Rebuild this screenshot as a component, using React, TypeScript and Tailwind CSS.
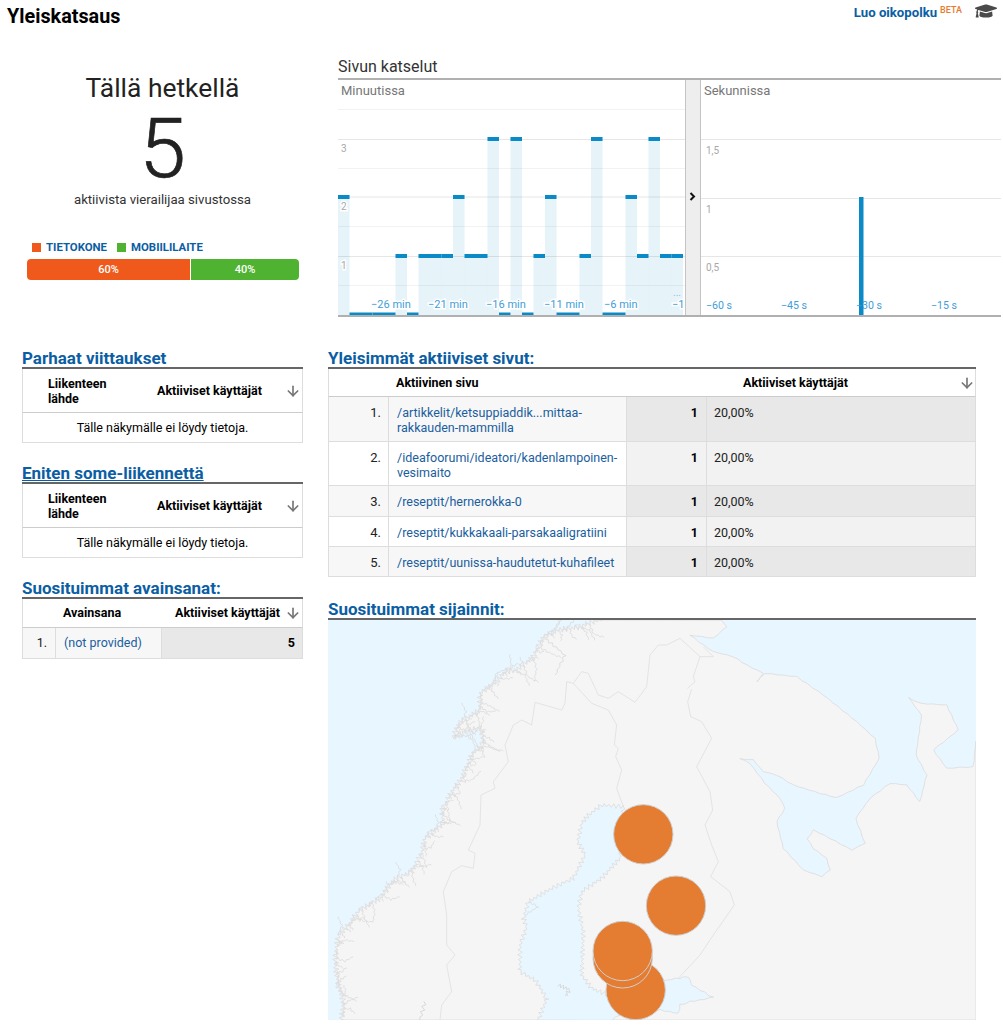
import { ArrowDown } from "lucide-react";
import { FaGraduationCap } from "react-icons/fa";

type P = [number, number];
const z7 = (a: P[]): P[] => a.map(([x, y]) => [x + 975, y] as P);

const jag = (pts: P[], amp: number, step = 9): P[] => {
  const out: P[] = [];
  let n = 0;
  for (let i = 0; i < pts.length - 1; i++) {
    const [x1, y1] = pts[i];
    const [x2, y2] = pts[i + 1];
    const len = Math.hypot(x2 - x1, y2 - y1);
    const c = Math.max(1, Math.round(len / step));
    for (let k = 0; k < c; k++) {
      const t = k / c;
      const nx = -(y2 - y1) / len;
      const ny = (x2 - x1) / len;
      n++;
      const o = (n % 2 ? 1 : -1) * amp * (0.35 + 0.65 * Math.abs(Math.sin(n * 12.9898)));
      out.push([x1 + (x2 - x1) * t + nx * o, y1 + (y2 - y1) * t + ny * o]);
    }
  }
  out.push(pts[pts.length - 1]);
  return out;
};

const d = (pts: P[], close = false) =>
  "M" + pts.map(([x, y]) => `${x.toFixed(1)} ${y.toFixed(1)}`).join("L") + (close ? "Z" : "");

const westCoast: P[] = [
  [50, 1215], [55, 1160], [40, 1110], [30, 1040], [40, 960], [75, 925], [100, 890], [130, 870], [165, 850],
  [205, 795], [260, 770], [290, 715], [300, 670], [355, 625], [350, 590], [375, 540], [410, 490], [440, 420],
  [475, 385], [470, 340], [430, 345], [385, 370], [400, 325], [465, 285], [465, 235], [515, 200], [540, 170],
  [575, 165], [625, 125], [655, 65], [700, 45], [770, 35], [815, 15],
];
const arcticCoast: P[] = z7([
  [215, 15], [230, 35], [190, 70], [120, 60], [160, 90], [190, 110], [250, 125], [290, 150], [340, 175], [320, 200],
  [345, 175], [440, 185], [520, 240], [620, 320], [675, 370], [688, 430], [640, 510], [560, 548], [510, 535],
  [430, 510], [380, 480], [340, 470], [310, 435], [270, 430], [300, 445], [345, 505], [390, 550], [405, 580],
  [380, 620], [400, 700], [460, 765], [515, 785], [540, 765], [530, 730], [490, 700], [472, 672], [490, 645],
  [540, 670], [605, 705], [645, 685], [617, 610], [660, 550], [720, 505], [770, 510], [810, 560], [830, 480],
  [798, 420], [815, 300], [775, 248], [810, 265], [890, 270], [925, 345], [850, 405], [890, 460], [970, 455], [978, 378],
]);
const land = d([...jag(westCoast, 9, 6), ...jag(arcticCoast, 1.2, 18), [1953, 1215], [50, 1215]], true);

const fjordPath = (() => {
  let out = "";
  let n = 0;
  for (let i = 0; i < westCoast.length - 1; i++) {
    const [x1, y1] = westCoast[i];
    const [x2, y2] = westCoast[i + 1];
    const len = Math.hypot(x2 - x1, y2 - y1);
    const c = Math.max(1, Math.round(len / 12));
    for (let k = 0; k < c; k++) {
      n++;
      const t = k / c;
      const x = x1 + (x2 - x1) * t;
      const y = y1 + (y2 - y1) * t;
      const r = Math.abs(Math.sin(n * 7.31));
      const l = 10 + (y < 520 ? 66 : 50) * r * r;
      const a = 0.1 + 1.3 * Math.sin(n * 2.39);
      const mx = x + (l / 2) * Math.cos(a);
      const my = y + (l / 2) * Math.sin(a);
      const a2 = a + 0.9 * Math.sin(n * 5.1);
      out += d(jag([[x, y], [mx, my], [mx + (l / 2) * Math.cos(a2), my + (l / 2) * Math.sin(a2)]], 3, 7));
    }
  }
  return out;
})();

const swedenCoast: P[] = [
  [895, 575], [830, 570], [790, 600], [770, 625], [758, 680], [780, 720], [745, 790], [680, 820], [610, 860],
  [595, 910], [605, 935], [585, 990], [585, 1070], [630, 1095], [665, 1150], [640, 1215],
];
const gulf: P[] = [
  [860, 1215], [900, 1190], ...z7([[30, 1185], [85, 1195], [90, 1170], [120, 1160], [190, 1148], [125, 1110], [115, 1085], [50, 1095]]),
];
const finlandCoast: P[] = [
  [850, 1140], [800, 1120], [770, 1080], [775, 950], [760, 880], [770, 830], [830, 790], [885, 730], [895, 575],
];
const baltic = d([...jag(swedenCoast, 7, 7), ...jag(gulf, 2, 14), ...jag(finlandCoast, 7, 7)], true);

const borders: P[][] = [
  [[345, 1215], [350, 1170], [380, 1130], [365, 1050], [390, 1020], [365, 990], [365, 900], [355, 830], [380, 770], [410, 752], [445, 760], [450, 715], [430, 705], [465, 630], [468, 540], [510, 520], [505, 500], [550, 440], [540, 390], [565, 330], [590, 315], [620, 330], [630, 262], [710, 285], [720, 265], [725, 200], [745, 205]],
  [[745, 205], [770, 170], [790, 175], [820, 240], [850, 250], [880, 230], [930, 262], [965, 215], [975, 120], [1000, 90], ...z7([[50, 90], [90, 70], [150, 125], [130, 185], [135, 200], [112, 220]])],
  [[745, 205], [800, 265], [850, 285], [875, 330], [868, 390], [880, 400], [872, 425], [890, 465], [875, 520], [895, 575]],
  z7([[125, 222], [113, 260], [122, 305], [155, 320], [185, 370], [140, 455], [180, 530], [188, 585], [165, 630], [185, 690], [205, 740], [182, 785], [240, 830], [253, 870], [190, 960], [150, 1020], [85, 1090]]),
  z7([[150, 125], [190, 125], [160, 95]]),
];

const MapArt = () => (
  <svg viewBox="9 15 1944 1200" className="block w-[648px] h-[400px]">
    <rect x="9" y="15" width="1944" height="1200" fill="#e8f6ff" />
    <path d={land} fill="#f5f5f5" stroke="#dcdcdc" strokeWidth="2.5" strokeLinejoin="round" />
    <path d={fjordPath} fill="none" stroke="#dcdcdc" strokeWidth="2.5" />
    <path d={baltic} fill="#e8f6ff" stroke="#dcdcdc" strokeWidth="2.5" strokeLinejoin="round" />
    <path d={d(jag([[700, 1110], [735, 1125], [720, 1140]], 6, 5))} fill="none" stroke="#d9d9d9" strokeWidth="3" />
    <path d={d(jag([[610, 860], [640, 875], [600, 900]], 3, 7))} fill="none" stroke="#d9d9d9" strokeWidth="2" />
    <path d={d(jag([[300, 1160], [285, 1215]], 6, 8))} fill="none" stroke="#d9d9d9" strokeWidth="3" />
    <path d={d(jag([[660, 70], [720, 120], [690, 180]], 4, 9))} fill="none" stroke="#d9d9d9" strokeWidth="2.5" />
    {borders.map((b, i) => (
      <path key={i} d={d(b)} fill="none" stroke="#e0e0e0" strokeWidth="2.5" strokeLinejoin="round" />
    ))}
    <g fill="#e47c31" stroke="#cfcfcf" strokeWidth="3">
      <circle cx="955" cy="658" r="89" />
      <circle cx="1053" cy="872" r="89" />
      <circle cx="932" cy="1125" r="89" />
      <circle cx="893" cy="1030" r="89" />
      <circle cx="893" cy="1008" r="89" />
    </g>
  </svg>
);

const values = [2, 0, 0, 0, 0, 1, 0, 1, 1, 1, 2, 1, 1, 3, 0, 3, 0, 1, 2, 0, 0, 1, 3, 0, 0, 2, 1, 3, 1, 1];
const tops = [232.5, 174, 115, 57];
const gridL = [29.5, 59.5, 88.5, 117, 146.5, 176.5, 205.5];
const halo = { paintOrder: "stroke", stroke: "#fff", strokeWidth: 3 } as const;

const MinuteChart = () => (
  <svg width="347" height="235" className="block" fontFamily="Roboto, sans-serif">
    {gridL.map((y, i) => (
      <line key={y} x1="0" x2="347" y1={y} y2={y} stroke={i % 2 ? "#e6e6e6" : "#f2f2f2"} />
    ))}
    {values.map((v, i) => (
      <g key={i}>
        <rect x={i * 11.5} y={tops[v]} width="11.5" height={235 - tops[v]} fill="#0a8ac6" fillOpacity={v ? 0.1 : 0} />
        <rect x={i * 11.5} y={tops[v]} width="11.5" height={v ? 4 : 3} fill="#0a8ac6" />
      </g>
    ))}
    {[["3", 68], ["2", 126], ["1", 185]].map(([t, y]) => (
      <text key={t} x="3" y={y as number + 4} fontSize="10" fill="#a8a8a8" style={halo}>{t}</text>
    ))}
    {[["−26 min", 33], ["−21 min", 90], ["−16 min", 148], ["−11 min", 206], ["−6 min", 266], ["−1", 334]].map(([t, x]) => (
      <text key={t} x={x as number} y="228" fontSize="11" fill="#3f9ed8" style={halo}>{t}</text>
    ))}
    <text x="335" y="216" fontSize="10" fill="#8dbfe0">...</text>
  </svg>
);

const SecondChart = () => (
  <svg width="300" height="235" className="block" fontFamily="Roboto, sans-serif">
    {[59.5, 118.5, 176.5].map((y) => (
      <line key={y} x1="0" x2="300" y1={y} y2={y} stroke="#e6e6e6" />
    ))}
    {[["1,5", 74], ["1", 133], ["0,5", 191]].map(([t, y]) => (
      <text key={t} x="5" y={y as number} fontSize="10" fill="#a8a8a8">{t}</text>
    ))}
    <rect x="158" y="117" width="4.5" height="118" fill="#0a8ac6" />
    {[["−60 s", 5], ["−45 s", 80], ["−30 s", 155], ["−15 s", 230]].map(([t, x]) => (
      <text key={t} x={x as number} y="229" fontSize="10.6" fill="#3f9ed8">{t}</text>
    ))}
  </svg>
);

const Heading = ({ children, underline }: { children: string; underline?: boolean }) => (
  <h2 className={`h-[18px] text-[17px] leading-[18px] font-bold text-[#0b5ea3] ${underline ? "underline" : ""}`}>{children}</h2>
);

const Sort = () => <ArrowDown size={16} strokeWidth={2.5} className="text-[#777]" />;

const EmptyTable = () => (
  <div className="border-t-2 border-[#666] text-[12.5px]">
    <div className="flex h-[44px] items-center border-x border-b border-[#ddd] border-b-[#ccc] font-bold text-black leading-[15px]">
      <div className="w-[134px] pl-[25px] pr-[50px]">Liikenteen lähde</div>
      <div className="flex-1 whitespace-nowrap">Aktiiviset käyttäjät</div>
      <div className="w-[17px]"><Sort /></div>
    </div>
    <div className="flex h-[30px] items-center justify-center border-x border-b border-[#ddd] pt-[1px] text-black">
      Tälle näkymälle ei löydy tietoja.
    </div>
  </div>
);

const KeywordTable = () => (
  <div className="border-t-2 border-[#666] text-[12.5px]">
    <div className="flex h-[29px] items-center border-x border-b border-[#ddd] border-b-[#ccc] font-bold text-black">
      <div className="w-[40px]" />
      <div className="w-[112px]">Avainsana</div>
      <div className="flex-1 whitespace-nowrap">Aktiiviset käyttäjät</div>
      <div className="w-[17px]"><Sort /></div>
    </div>
    <div className="flex h-[31px] border-x border-b border-[#ddd]">
      <div className="w-[33px] bg-[#f7f7f7] pr-[8px] text-right leading-[30px] text-[#222] border-r border-[#ddd]">1.</div>
      <div className="w-[106px] bg-[#f7f7f7] pl-[8px] leading-[30px] text-[#1a5e9e] border-r border-[#ddd]">(not provided)</div>
      <div className="flex-1 bg-[#e8e8e8] pr-[7px] text-right font-bold leading-[30px] text-black">5</div>
    </div>
  </div>
);

const rows = [
  { n: "1.", path: "/artikkelit/ketsuppiaddik...mittaa-rakkauden-mammilla", h: "h-[45px]" },
  { n: "2.", path: "/ideafoorumi/ideatori/kadenlampoinen-vesimaito", h: "h-[44px]" },
  { n: "3.", path: "/reseptit/hernerokka-0", h: "h-[31px]" },
  { n: "4.", path: "/reseptit/kukkakaali-parsakaaligratiini", h: "h-[30px]" },
  { n: "5.", path: "/reseptit/uunissa-haudutetut-kuhafileet", h: "h-[30px]" },
];

const PagesTable = () => (
  <div className="border-t-2 border-[#666] text-[12.5px]">
    <div className="flex h-[28px] items-center border-x border-b border-[#ddd] border-b-[#ccc] pt-[1px] font-bold text-black">
      <div className="w-[67px]" />
      <div className="w-[347px]">Aktiivinen sivu</div>
      <div className="flex-1 whitespace-nowrap">Aktiiviset käyttäjät</div>
      <div className="w-[16px]"><Sort /></div>
    </div>
    {rows.map((r, i) => {
      const odd = i % 2 === 0;
      return (
        <div key={r.n} className={`flex ${r.h} border-x border-b border-[#ddd] ${odd ? "bg-[#f7f7f7]" : "bg-white"}`}>
          <div className="w-[60px] shrink-0 border-r border-[#ddd] pr-[7px] pt-[8px] text-right text-[13px] leading-[15px] text-[#222]">{r.n}</div>
          <div className="w-[238px] shrink-0 border-r border-[#ddd] pl-[8px] pr-[5px] pt-[8px] leading-[15px] text-[#1a5e9e] break-words">
            {r.path}
          </div>
          <div className={`flex flex-1 ${odd ? "bg-[#e8e8e8]" : "bg-[#f2f2f2]"}`}>
            <div className="w-[80px] shrink-0 border-r border-[#ddd] pr-[8px] pt-[8px] text-right font-bold leading-[15px] text-black">1</div>
            <div className="pl-[7px] pt-[8px] leading-[15px] text-[#222]">20,00%</div>
          </div>
        </div>
      );
    })}
  </div>
);

export default function App() {
  return (
    <div className="w-[1003px] h-[1035px] bg-white font-['Roboto',sans-serif] overflow-hidden">
      <header className="flex h-[32px] items-start justify-between pl-[7px] pr-[6px]">
        <h1 className="text-[19.8px] leading-[33px] font-bold text-black">Yleiskatsaus</h1>
        <div className="flex items-start">
          <span className="mt-[5px] text-[13.2px] leading-[16px] font-bold text-[#0b5ea3]">Luo oikopolku</span>
          <span className="ml-[3px] mt-[5px] text-[9px] leading-[11px] font-medium text-[#e8792d]">BETA</span>
          <FaGraduationCap className="ml-[13px] text-[#4a4a4a]" size={22} />
        </div>
      </header>

      <section className="flex h-[285px]">
        <div className="w-[325px]">
          <div className="mt-[40px] text-center text-[26.4px] leading-[32px] text-[#222]">Tällä hetkellä</div>
          <div className="mt-[6px] text-center text-[84px] leading-[78px] font-light text-[#222] [-webkit-text-stroke:0.7px_#222]">5</div>
          <div className="mt-[3px] text-center text-[13.2px] leading-[18px] text-[#333]">aktiivista vierailijaa sivustossa</div>
          <div className="mt-[32px] flex items-center pl-[32px] text-[11.4px] leading-[12px] font-bold text-[#0b5ea3]">
            <span className="mr-[5px] h-[9px] w-[9px] bg-[#ef5a1c]" />
            <span className="mr-[10px]">TIETOKONE</span>
            <span className="mr-[5px] h-[9px] w-[9px] bg-[#4fb231]" />
            <span>MOBIILILAITE</span>
          </div>
          <div className="mx-[27px] mt-[6px] flex h-[21px] w-[272px] overflow-hidden rounded-[4px] text-[11px] leading-[21px] font-medium text-white">
            <div className="w-[163px] bg-[#ef5a1c] text-center">60%</div>
            <div className="flex-1 ml-[1px] bg-[#4fb231] text-center">40%</div>
          </div>
        </div>
        <div className="ml-[13px] w-[663px]">
          <div className="mt-[24px] h-[22px] text-[16px] leading-[21px] text-[#333]">Sivun katselut</div>
          <div className="flex h-[239px] border-t-2 border-b-2 border-[#b0b0b0]">
            <div className="relative w-[347px]">
              <div className="absolute left-[3px] top-[3px] text-[13px] leading-[16px] text-[#777]">Minuutissa</div>
              <MinuteChart />
            </div>
            <div className="flex w-[16px] items-center justify-center border-x border-[#c4c4c4] bg-[#eee] pb-[3px] pr-[1px]">
              <svg width="7" height="9" viewBox="0 0 7 9"><path d="M1.5 1 L5 4.5 L1.5 8" fill="none" stroke="#111" strokeWidth="2" /></svg>
            </div>
            <div className="relative flex-1">
              <div className="absolute left-[3px] top-[3px] text-[13px] leading-[16px] text-[#777]">Sekunnissa</div>
              <SecondChart />
            </div>
          </div>
        </div>
      </section>

      <section className="mt-[32px] flex items-start pl-[22px]">
        <div className="w-[281px]">
          <Heading>Parhaat viittaukset</Heading>
          <EmptyTable />
          <div className="mt-[21px]"><Heading underline>Eniten some-liikennettä</Heading></div>
          <EmptyTable />
          <div className="mt-[21px]"><Heading>Suosituimmat avainsanat:</Heading></div>
          <KeywordTable />
        </div>
        <div className="ml-[25px] w-[648px]">
          <Heading>Yleisimmät aktiiviset sivut:</Heading>
          <PagesTable />
          <div className="mt-[23px]"><Heading>Suosituimmat sijainnit:</Heading></div>
          <div className="border-t-2 border-[#666]"><MapArt /></div>
        </div>
      </section>
    </div>
  );
}
